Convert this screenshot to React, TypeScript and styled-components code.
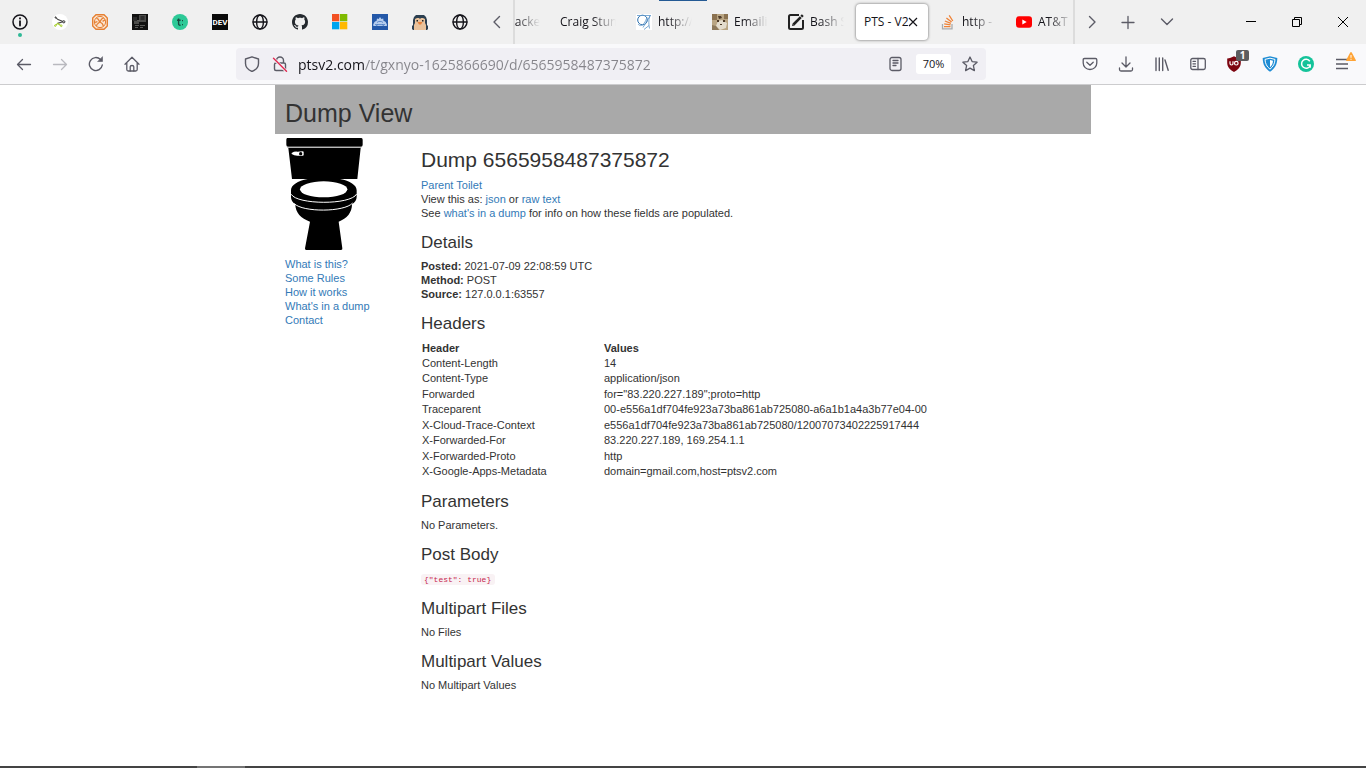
import React from "react";
import styled, { createGlobalStyle } from "styled-components";

const UI_FONT = `"Open Sans", "Noto Sans", sans-serif`;
const PAGE_FONT = `"Liberation Sans", Arial, sans-serif`;

const GlobalStyle = createGlobalStyle`
  *, *::before, *::after { box-sizing: border-box; }
  body { margin: 0; background: #fff; }
  button, input { font: inherit; color: inherit; border: 0; padding: 0; background: none; }
  svg { display: block; flex: none; }
`;

/* ---------- browser chrome ---------- */

const Window = styled.div`
  min-height: 100vh;
  display: flex;
  flex-direction: column;
  background: #fff;
`;

const TabBar = styled.header`
  position: relative;
  display: flex;
  height: 44px;
  background: #f0f0f0;
  color: #15141a;
  font: 12px/16px ${UI_FONT};
`;

const PeekEdge = styled.span`
  position: absolute;
  top: 0;
  left: 659px;
  width: 48px;
  height: 1px;
  background: #245a94;
`;

const PinnedTab = styled.button`
  position: relative;
  flex: none;
  width: 40px;
  display: grid;
  place-items: center;
`;

const UnreadDot = styled.span`
  position: absolute;
  left: 18px;
  bottom: 7px;
  width: 4px;
  height: 4px;
  border-radius: 50%;
  background: #2fb996;
`;

const BarButton = styled.button<{ $width: number }>`
  flex: none;
  width: ${(p) => p.$width}px;
  display: grid;
  place-items: center;
  color: #5b5b66;
`;

const TabStrip = styled.div`
  flex: 0 1 562px;
  min-width: 0;
  display: flex;
  justify-content: flex-end;
  overflow: hidden;
  border: solid #dcdcdc;
  border-width: 0 2px;
`;

const TabList = styled.div`
  display: flex;
  align-items: center;
  margin-right: -11px;
`;

const Tab = styled.div<{ $active?: boolean }>`
  flex: none;
  width: ${(p) => (p.$active ? 72 : 76)}px;
  height: 36px;
  margin-right: ${(p) => (p.$active ? 4 : 0)}px;
  padding: 0 ${(p) => (p.$active ? 10 : 8)}px 0 8px;
  display: flex;
  align-items: center;
  gap: ${(p) => (p.$active ? 0 : 6)}px;
  border-radius: 4px;
  background: ${(p) => (p.$active ? "#fff" : "transparent")};
  box-shadow: ${(p) => (p.$active ? "0 0 3px rgba(0, 0, 0, 0.6)" : "none")};
`;

const TabTitle = styled.button<{ $fade?: boolean }>`
  flex: 1;
  min-width: 0;
  overflow: hidden;
  white-space: nowrap;
  text-align: left;
  mask-image: ${(p) => (p.$fade ? "linear-gradient(to left, transparent 4px, #000 28px)" : "none")};
`;

const CloseTab = styled.button`
  flex: none;
  display: grid;
  place-items: center;
`;

const WindowControls = styled.div`
  display: flex;
  margin-left: auto;
  color: #000;
`;

const Toolbar = styled.nav`
  display: flex;
  align-items: center;
  height: 41px;
  padding: 0 6px;
  background: #f9f9fb;
  border-bottom: 1px solid #ccccce;
  color: #5b5b66;
  font: 14px/20px ${UI_FONT};
`;

const ToolButton = styled.button<{ $dim?: boolean }>`
  position: relative;
  flex: none;
  width: 36px;
  height: 32px;
  display: grid;
  place-items: center;
  opacity: ${(p) => (p.$dim ? 0.4 : 1)};
`;

const CountBadge = styled.span`
  position: absolute;
  top: 2px;
  right: 3px;
  width: 13px;
  height: 11px;
  border-radius: 2px;
  background: #5d5d5f;
  color: #fff;
  font: bold 10px/11px ${UI_FONT};
  text-align: center;
`;

const WarningMark = styled.svg`
  position: absolute;
  top: 4px;
  right: 4px;
`;

const AddressBar = styled.div`
  flex: 1;
  min-width: 0;
  height: 32px;
  margin: 0 86px;
  display: flex;
  align-items: center;
  border-radius: 4px;
  background: #f0eff4;
`;

const AddressButton = styled.button<{ $width: number }>`
  flex: none;
  width: ${(p) => p.$width}px;
  height: 28px;
  display: grid;
  place-items: center;
`;

const AddressInput = styled.input`
  flex: 1;
  min-width: 0;
  height: 28px;
  margin-left: 6px;
  outline: 0;
  background: linear-gradient(to right, #15141a 66px, #85848a 66px);
  background-clip: text;
  color: transparent;
`;

const ZoomLevel = styled.button`
  flex: none;
  width: 35px;
  height: 20px;
  margin: 0 3px;
  border-radius: 3px;
  background: #fff;
  color: #15141a;
  font: 11px/20px ${UI_FONT};
`;

/* ---------- page content ---------- */

const Page = styled.div`
  flex: 1;
  width: 100%;
  max-width: 816px;
  margin: 0 auto;
  color: #333;
  font: 11px/14px ${PAGE_FONT};
`;

const Banner = styled.div`
  padding: 14px 10px 7px;
  background: #a9a9a9;
`;

const BannerTitle = styled.h1`
  margin: 0;
  font-size: 25px;
  line-height: 28px;
  font-weight: normal;
`;

const Columns = styled.div`
  display: grid;
  grid-template-columns: 136px minmax(0, 1fr);
`;

const Sidebar = styled.aside`
  padding: 3px 10px;
`;

const SideLinks = styled.ul`
  margin: 6px 0 0;
  padding: 0;
  list-style: none;
`;

const Link = styled.a`
  color: #337ab7;
  text-decoration: none;
`;

const Main = styled.main`
  padding: 14px 10px;
`;

const Title = styled.h2`
  margin: 0 0 7px;
  font-size: 21px;
  line-height: 23px;
  font-weight: normal;
`;

const SectionTitle = styled.h3`
  margin: 14px 0 7px;
  font-size: 17px;
  line-height: 18px;
  font-weight: normal;
`;

const Line = styled.p`
  margin: 0;
`;

const CodeLine = styled(Line)`
  line-height: 15px;
`;

const HeaderTable = styled.table`
  width: 100%;
  height: 138px;
  margin-top: 8px;
  table-layout: fixed;
  border-collapse: collapse;
`;

const Cell = styled.td`
  padding: 0 1px;
`;

const HeadCell = styled.th`
  padding: 0 1px;
  text-align: left;

  &:first-child { width: 182px; }
`;

const Code = styled.code`
  padding: 1px 4px 1px 3px;
  border-radius: 3px;
  background: #f9f2f4;
  color: #c7254e;
  font: 8px/12px "Liberation Mono", monospace;
`;

const Taskbar = styled.footer`
  height: 2px;
  padding-left: 197px;
  background: #444;
`;

const TaskbarItem = styled.div`
  width: 48px;
  height: 2px;
  background: #747474;
`;

/* ---------- icons ---------- */

const Stroke = ({ size = 16, w = 1.3, children }: { size?: number; w?: number; children: React.ReactNode }) => (
  <svg width={size} height={size} viewBox="0 0 16 16" fill="none" stroke="currentColor" strokeWidth={w} strokeLinecap="round" strokeLinejoin="round">
    {children}
  </svg>
);

const GlobeIcon = () => (
  <Stroke w={1.4}>
    <circle cx="8" cy="8" r="7" />
    <ellipse cx="8" cy="8" rx="3.4" ry="7" />
    <path d="M1.2 8h13.600" />
  </Stroke>
);

const InfoIcon = () => (
  <Stroke w={1.5}>
    <circle cx="8" cy="8" r="7" />
    <path d="M8 7.2v4.3" strokeWidth="1.8" />
    <path d="M8 4.3v.3" strokeWidth="1.9" />
  </Stroke>
);

const GraphIcon = () => (
  <svg width="16" height="16" viewBox="0 0 16 16" fill="none">
    <circle cx="8" cy="8" r="8" fill="#fff" />
    <path d="M3.5 3.4 6 5.6l5 2M11 7.8l-5.500 1.600" stroke="#444" strokeWidth="1.1" />
    <path d="M3 11.8 5.700 9.400l3 2.100" stroke="#a6cf2c" strokeWidth="1.2" />
    <circle cx="3.6" cy="3.4" r=".6" stroke="#444" />
    <circle cx="11.8" cy="7.8" r="1.100" fill="#fff" stroke="#333" />
    <circle cx="3.3" cy="11.6" r=".800" fill="#fff" stroke="#a6cf2c" />
    <circle cx="9.3" cy="11.8" r=".800" fill="#fff" stroke="#a6cf2c" />
  </svg>
);

const OrangeIcon = () => (
  <svg width="16" height="16" viewBox="0 0 16 16" fill="none" stroke="#e58033">
    <path d="M4 .7h8L15.3 4v8L12 15.3H4L.7 12V4z" fill="#fbe5d2" strokeWidth="1.4" />
    <circle cx="8" cy="8" r="5.6" strokeWidth="1" />
    <path d="M4.500 4.300c3 .2 2 3 3.500 3.700s3 2 3.400 4M11.600 4.200c-3 0-2.400 2.600-3.800 3.800-1.200 1-3 1.600-3.400 3.800M3 8.300l2.400-.6M10.600 7.400l2.600-1.600" strokeWidth="1.300" />
  </svg>
);

const DarkPhotoIcon = () => (
  <svg width="16" height="16" viewBox="0 0 16 16">
    <path fill="#111" d="M0 0h16v16H0z" />
    <path fill="#4c4c4a" d="M7 1h7v7H7zM2 7h5v3H2z" />
    <path fill="#2b2b2b" d="M8.500 2h4v4h-4zM1 3h4v4H1z" />
    <path fill="#5a5a58" d="M3 11h4v1H3zM8 11h5v1H8zM3 13h3v1H3zM8 13h3v1H8zM5 6h3v1H5z" />
  </svg>
);

const TeachIcon = () => (
  <svg width="16" height="16" viewBox="0 0 16 16" fill="none">
    <circle cx="8" cy="8" r="8" fill="#2dc997" />
    <path d="M6.600 4.400v5.300c0 1.300.8 1.700 2 1.400M5 6.300h3.600" stroke="#174c40" strokeWidth="1.400" />
    <path d="M10 6.600h1M10 10.600h1" stroke="#174c40" strokeWidth="1.200" />
  </svg>
);

const DevIcon = () => (
  <svg width="16" height="16" viewBox="0 0 16 16">
    <path fill="#0a0a0a" d="M0 0h16v16H0z" />
    <text x="8" y="11" textAnchor="middle" fill="#fff" fontFamily="Roboto, Liberation Sans, sans-serif" fontWeight="bold" fontSize="8">DEV</text>
  </svg>
);

const GithubIcon = () => (
  <svg width="16" height="16" viewBox="0 0 16 16" fill="#24292e">
    <path d="M8 0C3.58 0 0 3.58 0 8c0 3.54 2.29 6.53 5.47 7.59.4.07.55-.17.55-.38 0-.19-.01-.82-.01-1.49-2.01.37-2.53-.49-2.69-.94-.09-.23-.48-.94-.82-1.13-.28-.15-.68-.52-.01-.53.63-.01 1.08.58 1.23.82.72 1.21 1.87.87 2.33.66.07-.52.28-.87.51-1.07-1.78-.2-3.64-.89-3.64-3.95 0-.87.31-1.59.82-2.15-.08-.2-.36-1.02.08-2.12 0 0 .67-.21 2.2.82.64-.18 1.32-.27 2-.27s1.36.09 2 .27c1.53-1.04 2.2-.82 2.2-.82.44 1.1.16 1.92.08 2.12.51.56.82 1.27.82 2.15 0 3.07-1.87 3.75-3.65 3.95.29.25.54.73.54 1.48 0 1.07-.01 1.93-.01 2.2 0 .21.15.46.55.38A8.01 8.01 0 0 0 16 8c0-4.42-3.58-8-8-8z" />
  </svg>
);

const MicrosoftIcon = () => (
  <svg width="16" height="16" viewBox="0 0 16 16">
    <path fill="#f25022" d="M0 0h7.3v7.3H0z" />
    <path fill="#7fba00" d="M8 0h7.3v7.3H8z" />
    <path fill="#00a4ef" d="M0 8h7.3v7.3H0z" />
    <path fill="#ffb900" d="M8 8h7.3v7.3H8z" />
  </svg>
);

const CloudIcon = () => (
  <svg width="16" height="16" viewBox="0 0 16 16">
    <path fill="#2458a8" d="M0 0h16v16H0z" />
    <path fill="#b6cdee" d="M5 4.500 6.600 5 8 3l1.400 2 1.800-.5.4 2.500c1.600 0 2.400 1 2.600 2.200 1 .5.8 1.800.6 2.800H1.400C1 10.500 1.300 9.500 2 9.200 2.200 7.800 3 7.200 4.500 7z" />
    <path fill="none" stroke="#4677c0" strokeWidth=".8" d="M3 10.600h10M5 8.500c1-1.500 5-1.500 6 0M4 12l2-1.500M12 12l-2-1.500" />
  </svg>
);

const PenguinIcon = () => (
  <svg width="16" height="16" viewBox="0 0 16 16">
    <path fill="#2c3f50" d="M4 1h8l2 2 1 3v5l1 1v3l-1 1H1l-1-1v-3l1-1V6l1-3z" />
    <path fill="#e9c29b" d="M3 5l2-1h2l1 1 1-1h2l2 1v4l1 2v5H2v-5l1-2z" />
    <path fill="#222" d="M4.500 6h1.500v1.500H4.500zM10 6h1.500v1.500H10z" />
    <path fill="#e6803c" d="M5.500 8h5l-1.500 2.500H7z" />
  </svg>
);

const SketchIcon = () => (
  <svg width="16" height="16" viewBox="0 0 16 16" fill="none">
    <path fill="#fff" d="M0 0h16v16H0z" />
    <circle cx="6.500" cy="6" r="4.800" stroke="#2b6fae" />
    <path d="M1 1.500h14M14 1.500c-2 5-1 10-.5 13M14 2 7 13.500M2 10c3 4 7 0 9-7M8 15.500l5-4" stroke="#5c94c8" strokeWidth=".8" />
  </svg>
);

const CatIcon = () => (
  <svg width="16" height="16" viewBox="0 0 16 16">
    <path fill="#b9a583" d="M0 0h16v16H0z" />
    <path fill="#8b7250" d="M0 0h5v6H0zM12 0h4v5h-4z" />
    <path fill="#e3dccd" d="M6 7l4-1 5 3-1 5-6 2-4-4z" />
    <path fill="#4d3a28" d="M6 2h3l1 2-3 1zM5 6h2v2H5zM11 6h2v2h-2zM8 10h2v1H8z" />
    <path fill="#8d785a" d="M0 11l4 1 3 4H0z" />
  </svg>
);

const EditIcon = () => (
  <svg width="16" height="16" viewBox="0 0 16 16" fill="none" stroke="#222">
    <path d="M11 1H2.500Q1 1 1 2.500v11Q1 15 2.500 15h11q1.500 0 1.500-1.500V6" strokeWidth="2" />
    <path d="M5.500 10.500 12.800 3.200" strokeWidth="2.600" />
    <path d="M13.300 2.700 14.800 1.200" strokeWidth="2.600" />
    <path d="M4 12l.6-2.600 2 2z" fill="#222" stroke="none" />
  </svg>
);

const StackIcon = () => (
  <svg width="16" height="16" viewBox="0 0 16 16" fill="none">
    <path d="M2.500 10v4.800h9.500V10" stroke="#a9abad" strokeWidth="1.300" />
    <path d="M4 12.600h6.500M4.200 9.900l6.400 1M4.900 7l6 2.400M6.400 4.100l5.200 4M9.200 1.400l3.600 5.600" stroke="#ef8236" strokeWidth="1.300" />
  </svg>
);

const YoutubeIcon = () => (
  <svg width="16" height="16" viewBox="0 0 16 16">
    <rect x="0" y="2.300" width="16" height="11.400" rx="3" fill="#f00" />
    <path fill="#fff" d="M6.300 5.500v5L10.700 8z" />
  </svg>
);

const ChevronIcon = ({ d }: { d: string }) => (
  <Stroke w={1.4}>
    <path d={d} />
  </Stroke>
);

const BackIcon = () => (
  <Stroke>
    <path d="M14.500 8.500h-13M6.500 3.500l-5 5 5 5" />
  </Stroke>
);

const ForwardIcon = () => (
  <Stroke>
    <path d="M1.500 8.500h13M9.500 3.500l5 5-5 5" />
  </Stroke>
);

const ReloadIcon = () => (
  <Stroke w={1.4}>
    <path d="M14.300 9A6.500 6.500 0 1 1 12.500 3.500" />
    <path d="M14.500 1v4.500H10z" fill="currentColor" strokeWidth=".6" />
  </Stroke>
);

const HomeIcon = () => (
  <Stroke>
    <path d="M1 8.300 8 1.200l7 7.100M2.800 7v6.500q0 1.500 1.500 1.500h7.400q1.500 0 1.500-1.500V7" />
    <path d="M6.200 15v-4.200q0-1.300 1.800-1.300t1.800 1.300V15" />
  </Stroke>
);

const ShieldIcon = () => (
  <Stroke w={1.4}>
    <path d="M8 .8 14.500 3v4.500c0 3.500-3 6.500-6.500 8-3.500-1.500-6.500-4.500-6.500-8V3z" />
  </Stroke>
);

const InsecureIcon = () => (
  <Stroke w={1.4}>
    <path d="M4.500 7V4.500a3.500 3.500 0 0 1 7 0V7M4 7h8q1.500 0 1.500 1.500V13q0 1.500-1.500 1.500H4Q2.500 14.500 2.500 13V8.500Q2.500 7 4 7z" />
    <path d="M1.500 2.500 14 15" stroke="#f0eff4" strokeWidth="3" />
    <path d="M1.500 2.200 14.500 15.200" stroke="#e22850" />
  </Stroke>
);

const ReaderIcon = () => (
  <Stroke>
    <rect x="2" y="1.500" width="11" height="13" rx="2" />
    <path d="M5 4.500h5M5 7h5M5 9.500h3" />
  </Stroke>
);

const StarIcon = () => (
  <Stroke>
    <path d="M8 1l2.100 4.600 5 .6-3.700 3.400 1 5L8 12.100l-4.400 2.500 1-5L.9 6.200l5-.6z" />
  </Stroke>
);

const PocketIcon = () => (
  <Stroke>
    <path d="M2.500 2.500h11q1.300 0 1.300 1.300V7A6.800 6.500 0 0 1 1.200 7V3.800q0-1.300 1.300-1.300z" />
    <path d="M4.800 6.300 8 9.300l3.200-3" />
  </Stroke>
);

const DownloadIcon = () => (
  <Stroke>
    <path d="M8 .8v10M4 7l4 4 4-4M1.500 12v1.500q0 1.500 1.500 1.500h10q1.500 0 1.500-1.500V12" />
  </Stroke>
);

const LibraryIcon = () => (
  <Stroke w={1.4}>
    <path d="M2 2v12.500M5.300 2v12.500M8.700 2v12.500M11 4l3.200 10.300" />
  </Stroke>
);

const SidebarIcon = () => (
  <Stroke>
    <rect x=".8" y="2.500" width="14.500" height="11" rx="1.800" />
    <path d="M8 2.500v11M3 5.300h2.500M3 7.800h2.500M3 10.300h2.500" />
  </Stroke>
);

const UblockIcon = () => (
  <svg width="16" height="16" viewBox="0 0 16 16">
    <path fill="#7d0510" d="M8 .3c2 1.300 4.500 2 6.800 2.200v4.500c0 4.500-3.500 7-6.800 9-3.300-2-6.800-4.500-6.800-9V2.500C3.500 2.300 6 1.600 8 .3z" />
    <path fill="none" stroke="#fff" strokeWidth="1.200" d="M4 5.300v2.200q0 1.500 1.500 1.500T7 7.500V5.300" />
    <circle cx="10.300" cy="7.200" r="1.800" fill="none" stroke="#fff" strokeWidth="1.200" />
  </svg>
);

const VpnIcon = () => (
  <svg width="16" height="16" viewBox="0 0 16 16" fill="none">
    <path fill="#1e8cd4" d="M8 .3 15.300 2c0 6-2.300 10.500-7.300 13.700C3 12.500.700 8 .700 2z" />
    <path stroke="#fff" d="M8 2.200 13 3.400c-.2 4-1.700 7.200-5 9.800-3.300-2.600-4.800-5.800-5-9.800z" />
    <path fill="#fff" d="M8 4l3 .7c-.2 2.800-1 4.700-3 6.500z" />
  </svg>
);

const GrammarIcon = () => (
  <svg width="16" height="16" viewBox="0 0 16 16" fill="none">
    <circle cx="8" cy="8" r="8" fill="#15c39a" />
    <path d="M11.800 5.200A4.500 4.500 0 1 0 12 10M9 9h3.200v2.800" stroke="#fff" strokeWidth="1.500" />
  </svg>
);

const MenuIcon = () => (
  <svg width="16" height="16" viewBox="0 0 16 16" stroke="currentColor" strokeWidth="1.300">
    <path d="M2 3.500h12M2 8h12M2 12.500h12" />
  </svg>
);

const ToiletDrawing = () => (
  <svg width="80" height="114" viewBox="45 171 240 342" role="img" aria-label="Toilet">
    <path d="M52 174h222q4 0 4 5v15q0 6-5 6H54q-5 0-5-6v-15q0-5 3-5zM55 204h217l-10 93h-52c30 6 50 18 50 34v20c0 8-5 16-14 22 0 25-15 43-40 52l11 80q1 5-4 5H109q-5 0-4-5l15-80c-27-9-44-27-44-52-9-6-13-14-13-22v-20c0-16 20-28 50-34H66z" />
    <path d="M52 202h222" stroke="#aaa" strokeWidth="3" />
    <ellipse cx="161" cy="328" rx="71" ry="24" fill="#fff" />
    <path d="M64 343c16 31 178 33 196-1M73 371c25 26 150 26 175-2" fill="none" stroke="#fff" strokeWidth="3" />
    <path d="M65 219q8-5 17-4l16-1q3 0 3 3v8q0 2-3 2H82q-10 0-17-5z" fill="#fff" />
    <circle cx="92" cy="221" r="5" />
  </svg>
);

/* ---------- data ---------- */

const pinnedTabs = [
  { name: "Info", icon: <InfoIcon />, unread: true },
  { name: "Graph", icon: <GraphIcon /> },
  { name: "Network", icon: <OrangeIcon /> },
  { name: "Photo", icon: <DarkPhotoIcon /> },
  { name: "Teach", icon: <TeachIcon /> },
  { name: "Dev", icon: <DevIcon /> },
  { name: "Site", icon: <GlobeIcon /> },
  { name: "GitHub", icon: <GithubIcon /> },
  { name: "Microsoft", icon: <MicrosoftIcon /> },
  { name: "Cloud", icon: <CloudIcon /> },
  { name: "Penguin", icon: <PenguinIcon /> },
  { name: "Site", icon: <GlobeIcon /> },
];

const tabs = [
  { title: "Hacke", icon: <GlobeIcon /> },
  { title: "Craig Stun" },
  { title: "http://", icon: <SketchIcon /> },
  { title: "Emaili", icon: <CatIcon /> },
  { title: "Bash S", icon: <EditIcon /> },
  { title: "PTS - V2", active: true },
  { title: "http -", icon: <StackIcon /> },
  { title: "AT&T", icon: <YoutubeIcon /> },
];

const tools = [
  { name: "Save to Pocket", icon: <PocketIcon /> },
  { name: "Downloads", icon: <DownloadIcon /> },
  { name: "Library", icon: <LibraryIcon /> },
  { name: "Sidebars", icon: <SidebarIcon /> },
  { name: "Blocker", icon: <UblockIcon />, extra: <CountBadge>1</CountBadge> },
  { name: "VPN", icon: <VpnIcon /> },
  { name: "Grammar", icon: <GrammarIcon /> },
  {
    name: "Menu",
    icon: <MenuIcon />,
    extra: (
      <WarningMark width="10" height="10" viewBox="0 0 10 10">
        <path fill="#ffa436" d="M5 0q.6 0 .9.700L9.800 8q.4 1-.700 1H.9Q-.2 9 .2 8L4.100.700Q4.400 0 5 0z" />
        <path stroke="#fff" d="M5 3v2.800M5 6.800v1" />
      </WarningMark>
    ),
  },
];

const sideLinks = ["What is this?", "Some Rules", "How it works", "What's in a dump", "Contact"];

const details = [
  ["Posted:", "2021-07-09 22:08:59 UTC"],
  ["Method:", "POST"],
  ["Source:", "127.0.0.1:63557"],
];

const headers = [
  ["Content-Length", "14"],
  ["Content-Type", "application/json"],
  ["Forwarded", 'for="83.220.227.189";proto=http'],
  ["Traceparent", "00-e556a1df704fe923a73ba861ab725080-a6a1b1a4a3b77e04-00"],
  ["X-Cloud-Trace-Context", "e556a1df704fe923a73ba861ab725080/12007073402225917444"],
  ["X-Forwarded-For", "83.220.227.189, 169.254.1.1"],
  ["X-Forwarded-Proto", "http"],
  ["X-Google-Apps-Metadata", "domain=gmail.com,host=ptsv2.com"],
];

export default function App() {
  return (
    <Window>
      <GlobalStyle />
      <TabBar>
        <PeekEdge />
        {pinnedTabs.map((tab, i) => (
          <PinnedTab key={i} aria-label={tab.name}>
            {tab.icon}
            {tab.unread && <UnreadDot />}
          </PinnedTab>
        ))}
        <BarButton $width={33} aria-label="Scroll tabs left">
          <ChevronIcon d="M10.500 2.500 5 8l5.500 5.500" />
        </BarButton>
        <TabStrip>
          <TabList>
            {tabs.map((tab) => (
              <Tab key={tab.title} $active={tab.active}>
                {tab.icon}
                <TabTitle $fade={!tab.active}>{tab.title}</TabTitle>
                {tab.active && (
                  <CloseTab aria-label="Close tab">
                    <svg width="10" height="10" viewBox="0 0 10 10" stroke="#15141a" strokeWidth="1.200">
                      <path d="M1 1l8 8M9 1 1 9" />
                    </svg>
                  </CloseTab>
                )}
              </Tab>
            ))}
          </TabList>
        </TabStrip>
        <BarButton $width={34} aria-label="Scroll tabs right">
          <ChevronIcon d="M5.500 2.500 11 8l-5.500 5.500" />
        </BarButton>
        <BarButton $width={38} aria-label="New tab">
          <Stroke>
            <path d="M8 2.500v12M2 8.500h12" />
          </Stroke>
        </BarButton>
        <BarButton $width={40} aria-label="List all tabs">
          <ChevronIcon d="M2.500 5 8 10.500 13.500 5" />
        </BarButton>
        <WindowControls>
          <BarButton $width={46} aria-label="Minimize">
            <svg width="10" height="10" viewBox="0 0 10 10" stroke="#000"><path d="M0 4.500h10" /></svg>
          </BarButton>
          <BarButton $width={46} aria-label="Restore">
            <svg width="10" height="10" viewBox="0 0 10 10" fill="none" stroke="#000">
              <path d="M.5 2.500h7v7h-7zM2.500 2.500v-2h7v7h-2" />
            </svg>
          </BarButton>
          <BarButton $width={46} aria-label="Close">
            <svg width="10" height="10" viewBox="0 0 10 10" stroke="#000"><path d="M0 0l10 10M10 0 0 10" /></svg>
          </BarButton>
        </WindowControls>
      </TabBar>

      <Toolbar>
        <ToolButton aria-label="Back"><BackIcon /></ToolButton>
        <ToolButton aria-label="Forward" $dim><ForwardIcon /></ToolButton>
        <ToolButton aria-label="Reload"><ReloadIcon /></ToolButton>
        <ToolButton aria-label="Home"><HomeIcon /></ToolButton>
        <AddressBar>
          <AddressButton $width={32} aria-label="Tracking protection"><ShieldIcon /></AddressButton>
          <AddressButton $width={24} aria-label="Connection not secure"><InsecureIcon /></AddressButton>
          <AddressInput aria-label="Address" defaultValue="ptsv2.com/t/gxnyo-1625866690/d/6565958487375872" />
          <AddressButton $width={34} aria-label="Reader view"><ReaderIcon /></AddressButton>
          <ZoomLevel>70%</ZoomLevel>
          <AddressButton $width={32} aria-label="Bookmark"><StarIcon /></AddressButton>
        </AddressBar>
        {tools.map((tool) => (
          <ToolButton key={tool.name} aria-label={tool.name}>
            {tool.icon}
            {tool.extra}
          </ToolButton>
        ))}
      </Toolbar>

      <Page>
        <Banner>
          <BannerTitle>Dump View</BannerTitle>
        </Banner>
        <Columns>
          <Sidebar>
            <ToiletDrawing />
            <SideLinks>
              {sideLinks.map((label) => (
                <li key={label}><Link href="#">{label}</Link></li>
              ))}
            </SideLinks>
          </Sidebar>
          <Main>
            <Title>Dump 6565958487375872</Title>
            <Line><Link href="#">Parent Toilet</Link></Line>
            <Line>View this as: <Link href="#">json</Link> or <Link href="#">raw text</Link></Line>
            <Line>See <Link href="#">what's in a dump</Link> for info on how these fields are populated.</Line>

            <SectionTitle>Details</SectionTitle>
            {details.map(([name, value]) => (
              <Line key={name}><b>{name}</b> {value}</Line>
            ))}

            <SectionTitle>Headers</SectionTitle>
            <HeaderTable>
              <thead>
                <tr>
                  <HeadCell scope="col">Header</HeadCell>
                  <HeadCell scope="col">Values</HeadCell>
                </tr>
              </thead>
              <tbody>
                {headers.map(([name, value]) => (
                  <tr key={name}>
                    <Cell>{name}</Cell>
                    <Cell>{value}</Cell>
                  </tr>
                ))}
              </tbody>
            </HeaderTable>

            <SectionTitle>Parameters</SectionTitle>
            <Line>No Parameters.</Line>

            <SectionTitle>Post Body</SectionTitle>
            <CodeLine><Code>{'{"test": true}'}</Code></CodeLine>

            <SectionTitle>Multipart Files</SectionTitle>
            <Line>No Files</Line>

            <SectionTitle>Multipart Values</SectionTitle>
            <Line>No Multipart Values</Line>
          </Main>
        </Columns>
      </Page>

      <Taskbar>
        <TaskbarItem />
      </Taskbar>
    </Window>
  );
}
